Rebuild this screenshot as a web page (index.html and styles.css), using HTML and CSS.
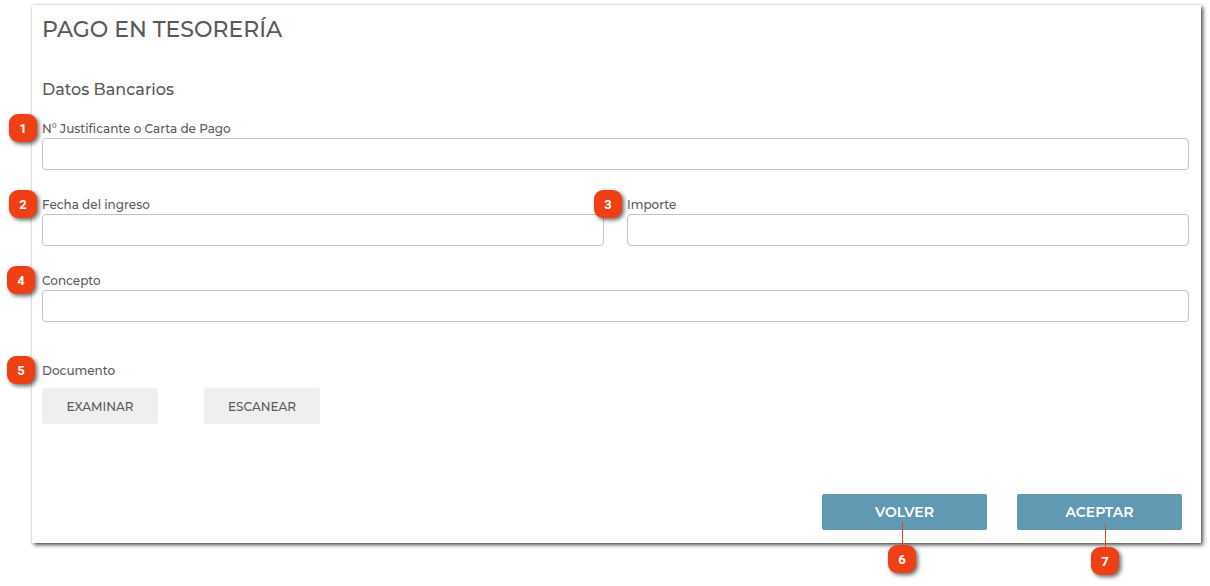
FILE: index.html
```html
<!DOCTYPE html>
<html lang="es">
<head>
<meta charset="utf-8">
<meta name="viewport" content="width=device-width, initial-scale=1">
<title>Pago en Tesorería</title>
<link rel="stylesheet" href="styles.css">
</head>
<body>
<main class="page">
<section class="card">
  <h1 class="title">PAGO EN TESORERÍA</h1>
  <h2 class="subtitle">Datos Bancarios</h2>
  <form class="form">
    <div class="field">
      <span class="badge badge-side">1</span>
      <label for="justificante">N° Justificante o Carta de Pago</label>
      <input id="justificante" type="text">
    </div>
    <div class="columns">
      <div class="field">
        <span class="badge badge-side">2</span>
        <label for="fecha">Fecha del ingreso</label>
        <input id="fecha" type="text">
      </div>
      <div class="field">
        <span class="badge badge-side">3</span>
        <label for="importe">Importe</label>
        <input id="importe" type="text">
      </div>
    </div>
    <div class="field">
      <span class="badge badge-side badge-out">4</span>
      <label for="concepto">Concepto</label>
      <input id="concepto" type="text">
    </div>
    <div class="field document" role="group" aria-labelledby="documento">
      <span class="badge badge-side badge-out">5</span>
      <span class="group-label" id="documento">Documento</span>
      <div class="document-buttons">
        <button class="btn btn-light" type="button">EXAMINAR</button>
        <button class="btn btn-light" type="button">ESCANEAR</button>
      </div>
    </div>
    <div class="actions">
      <div class="action">
        <button class="btn btn-primary" type="button">VOLVER</button>
        <span class="pin pin-back"><span class="badge">6</span></span>
      </div>
      <div class="action">
        <button class="btn btn-primary" type="submit">ACEPTAR</button>
        <span class="pin pin-accept"><span class="badge">7</span></span>
      </div>
    </div>
  </form>
</section>
</main>
</body>
</html>
```
FILE: styles.css
```css
* {
  box-sizing: border-box;
}

body {
  margin: 0;
  background: #fff;
  color: #5a5a5a;
  font-family: Montserrat, Inter, "Open Sans", sans-serif;
  font-size: 12px;
}

.page {
  min-height: 100vh;
  padding: 5px 9px 40px 32px;
}

.card {
  padding: 9px 12px 13px 10px;
  background: #fff;
  box-shadow: 2px 2px 4px rgba(0, 0, 0, 0.7), 0 0 2px rgba(0, 0, 0, 0.15);
}

.title {
  margin: 0 0 32px;
  font-size: 22px;
  font-weight: 500;
  line-height: 32px;
}

.subtitle {
  margin: 0 0 17px;
  font-size: 16px;
  font-weight: 500;
  line-height: 24px;
}

.form {
  display: flex;
  flex-direction: column;
  gap: 25px;
}

.columns {
  display: grid;
  grid-template-columns: 1fr 1fr;
  gap: 23px;
}

.field {
  position: relative;
  display: flex;
  flex-direction: column;
}

.field label,
.group-label {
  font-weight: 500;
  line-height: 19px;
}

.field input {
  width: 100%;
  height: 32px;
  padding: 0 10px;
  border: 1px solid #c4c4c4;
  border-radius: 4px;
  background: #fff;
  color: inherit;
  font: inherit;
}

.document {
  margin-top: 14px;
}

.document-buttons {
  display: flex;
  gap: 46px;
  margin-top: 8px;
}

.btn {
  height: 36px;
  padding: 0;
  border: 0;
  border-radius: 2px;
  font-family: inherit;
  cursor: pointer;
}

.btn-light {
  width: 116px;
  background: #efefef;
  color: #5a5a5a;
  font-size: 12px;
  font-weight: 500;
}

.btn-primary {
  width: 165px;
  background: #6198b2;
  color: #fff;
  font-size: 14px;
  font-weight: 600;
}

.actions {
  display: flex;
  justify-content: flex-end;
  gap: 30px;
  margin: 45px 7px 0 0;
}

.action {
  position: relative;
  display: flex;
}

.badge {
  display: flex;
  align-items: center;
  justify-content: center;
  width: 28px;
  height: 28px;
  border-radius: 9px;
  background: #ee4014;
  box-shadow: 2px 2px 4px rgba(0, 0, 0, 0.6);
  color: #fff;
  font-family: Roboto, sans-serif;
  font-size: 13px;
  font-weight: 700;
}

.badge-side {
  position: absolute;
  top: -5px;
  left: -33px;
}

.badge-out {
  left: -35px;
}

.pin {
  position: absolute;
  top: 28px;
  display: flex;
  flex-direction: column;
  align-items: center;
}

.pin::before {
  content: "";
  width: 1px;
  height: 23px;
  background: #ee4014;
}

.pin-back {
  left: 66px;
}

.pin-accept {
  top: 30px;
  left: 74px;
}
```
